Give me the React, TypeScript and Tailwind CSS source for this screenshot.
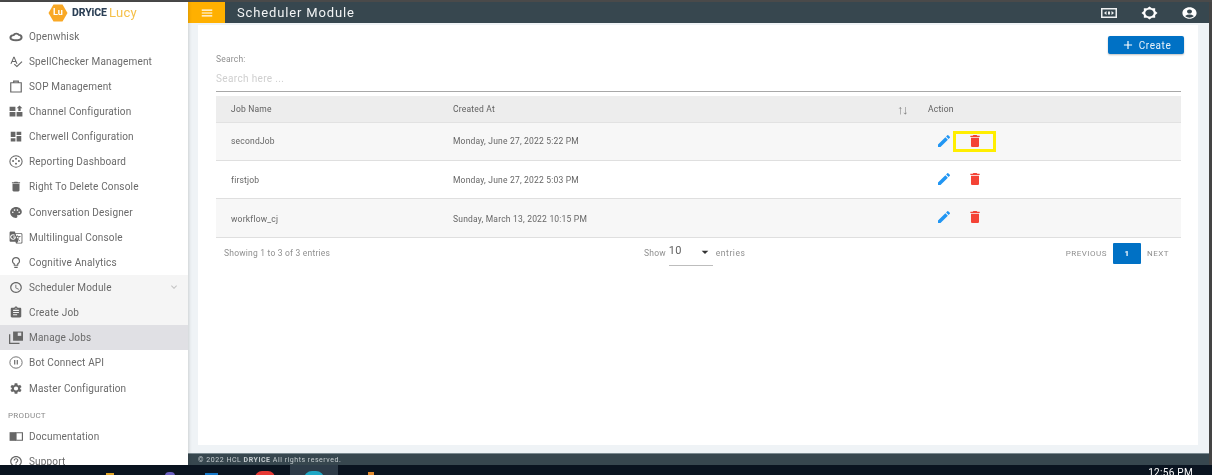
import type { ComponentType } from 'react';
import {
  MdAccessTime,
  MdAccountCircle,
  MdAdd,
  MdArrowDropDown,
  MdAssignment,
  MdBrightness5,
  MdDashboard,
  MdDelete,
  MdEdit,
  MdExpandMore,
  MdGTranslate,
  MdHelpOutline,
  MdLightbulbOutline,
  MdMenu,
  MdPalette,
  MdSettings,
  MdSpellcheck,
} from 'react-icons/md';

type IconProps = { className?: string; preserveAspectRatio?: string };
type NavItem = { label: string; icon: ComponentType<IconProps>; tone?: string; chevron?: boolean };

// the few icons the packages have no close match for
function CloudRing(props: IconProps) {
  return (
    <svg viewBox="0 0 24 24" {...props}>
      <path
        d="M2.500 14.500c0-3.500 3-5 5.500-5 1.500-3.500 7-4 9-.5 2.500 0 4.500 2 4.500 5 0 3-3 5-9.500 5s-9.500-1.500-9.500-4.500z"
        fill="none"
        stroke="currentColor"
        strokeWidth="3.500"
      />
    </svg>
  );
}

function Clipboard(props: IconProps) {
  return (
    <svg viewBox="0 0 24 24" {...props}>
      <path d="M3 5h18v17H3zM8 5V2h8v3" fill="none" stroke="currentColor" strokeWidth="2" />
    </svg>
  );
}

function ChannelGrid(props: IconProps) {
  return (
    <svg viewBox="0 0 24 24" {...props}>
      <path d="M1 3h10v8H1zM1 13h10v8H1zM13 13h10v8H13zM18 1l5 5h-3v5h-4V6h-3z" fill="currentColor" />
    </svg>
  );
}

function DotsDial(props: IconProps) {
  return (
    <svg viewBox="0 0 24 24" {...props}>
      <circle cx="12" cy="12" r="10.500" fill="none" stroke="currentColor" strokeWidth="1.800" />
      <circle cx="7" cy="11" r="1.700" fill="currentColor" />
      <circle cx="12" cy="7" r="1.700" fill="currentColor" />
      <circle cx="17" cy="11" r="1.700" fill="currentColor" />
      <circle cx="12" cy="16" r="1.700" fill="currentColor" />
    </svg>
  );
}

function CardStack(props: IconProps) {
  return (
    <svg viewBox="0 0 24 24" {...props}>
      <path d="M7 1h17v17H7z" fill="currentColor" />
      <path d="M15 3h6v6h-6z" fill="#e0e0e4" />
      <path d="M1 6v17h17" fill="none" stroke="currentColor" strokeWidth="2.400" />
    </svg>
  );
}

function BotRing(props: IconProps) {
  return (
    <svg viewBox="0 0 24 24" {...props}>
      <circle cx="12" cy="12" r="10.500" fill="none" stroke="currentColor" strokeWidth="1.600" />
      <path d="M9.800 7.500v8M14.200 7.500v8" stroke="currentColor" strokeWidth="2" />
    </svg>
  );
}

function BookHalf(props: IconProps) {
  return (
    <svg viewBox="0 0 24 24" {...props}>
      <path d="M1 4h11v16H1z" fill="currentColor" />
      <path d="M12 5h11v14H12z" fill="none" stroke="currentColor" strokeWidth="2" />
    </svg>
  );
}

function Overscan({ className }: { className?: string }) {
  return (
    <svg viewBox="0 0 16 10" className={className}>
      <rect x="0.750" y="0.750" width="14.500" height="8.500" fill="none" stroke="currentColor" strokeWidth="1.500" />
      <path d="M3 5l2.500-2v4zM13 5l-2.500-2v4zM7 3.500h2v3H7z" fill="currentColor" />
    </svg>
  );
}

const navItems: NavItem[] = [
  { label: 'Openwhisk', icon: CloudRing },
  { label: 'SpellChecker Management', icon: MdSpellcheck },
  { label: 'SOP Management', icon: Clipboard },
  { label: 'Channel Configuration', icon: ChannelGrid },
  { label: 'Cherwell Configuration', icon: MdDashboard },
  { label: 'Reporting Dashboard', icon: DotsDial },
  { label: 'Right To Delete Console', icon: MdDelete },
  { label: 'Conversation Designer', icon: MdPalette },
  { label: 'Multilingual Console', icon: MdGTranslate },
  { label: 'Cognitive Analytics', icon: MdLightbulbOutline },
  { label: 'Scheduler Module', icon: MdAccessTime, tone: 'bg-[#f5f5f5]', chevron: true },
  { label: 'Create Job', icon: MdAssignment, tone: 'bg-[#f5f5f5]' },
  { label: 'Manage Jobs', icon: CardStack, tone: 'bg-[#e0e0e4]' },
  { label: 'Bot Connect API', icon: BotRing },
  { label: 'Master Configuration', icon: MdSettings },
];

const jobs = [
  { name: 'secondJob', created: 'Monday, June 27, 2022 5:22 PM', row: 'h-[38px] bg-[#f7f7f7]', text: '' },
  { name: 'firstjob', created: 'Monday, June 27, 2022 5:03 PM', row: 'h-[38px] bg-white', text: 'pt-[2px]' },
  { name: 'workflow_cj', created: 'Sunday, March 13, 2022 10:15 PM', row: 'h-[39px] bg-[#f7f7f7]', text: 'pt-[2px]' },
];

function NavRow({ item }: { item: NavItem }) {
  const Icon = item.icon;
  return (
    <div className={`flex h-[25.15px] shrink-0 items-center gap-[6px] pl-[9px] pr-[8px] ${item.tone ?? ''}`}>
      <Icon preserveAspectRatio="none" className="h-[13px] w-[14px] shrink-0 text-[#666666]" />
      <span className="flex-1 text-[10px] tracking-[0.16px] text-[#6a6a6a]">{item.label}</span>
      {item.chevron && <MdExpandMore className="h-3 w-3 text-[#c4c4c4]" />}
    </div>
  );
}

function Logo() {
  return (
    <div className="flex h-[21px] shrink-0 items-center pl-[48px]">
      <span className="relative flex h-[18px] w-[20px] items-center justify-center">
        <svg viewBox="0 0 20 18" className="absolute inset-0 h-full w-full">
          <path d="M5.500 0.500h9L19.500 9l-5 8.500h-9L0.500 9z" fill="#f9a825" />
        </svg>
        <span className="relative text-[9px] font-bold text-white">Lu</span>
      </span>
      <span className="ml-[4px] text-[10.500px] font-extrabold tracking-[-0.1px] text-[#2b3f55]">DRYiCE</span>
      <span className="ml-[2px] text-[13px] tracking-[0.3px] text-[#f5c04a]">Lucy</span>
    </div>
  );
}

export default function App() {
  return (
    <div className="flex h-[475px] w-[1212px] flex-col overflow-hidden bg-[#0a1420] font-['Roboto',sans-serif] blur-[0.4px]">
      <div className="h-[2px] shrink-0 bg-[#4a4a4a]" />
      <div className="flex h-[463px] shrink-0 border-r-[3px] border-[#444444]">
        {/* Sidebar */}
        <aside className="z-10 flex w-[188px] shrink-0 flex-col overflow-hidden bg-white shadow-[1px_0_3px_rgba(0,0,0,0.15)]">
          <Logo />
          <div className="h-[0.5px] shrink-0" />
          {navItems.map((item) => (
            <NavRow key={item.label} item={item} />
          ))}
          <div className="flex h-[23px] shrink-0 items-end pb-[2px] pl-[8px] text-[8px] tracking-[0.3px] text-[#8a8a8a]">
            PRODUCT
          </div>
          <NavRow item={{ label: 'Documentation', icon: BookHalf }} />
          <NavRow item={{ label: 'Support', icon: MdHelpOutline }} />
        </aside>

        <div className="flex min-w-0 flex-1 flex-col">
          {/* Top bar */}
          <header className="flex h-[21px] shrink-0 items-center bg-[#37474f] text-white">
            <div className="flex h-full w-[37px] items-center justify-center bg-[#ffb000]">
              <MdMenu className="h-[14px] w-[14px]" />
            </div>
            <h1 className="ml-[12px] flex-1 text-[13px] tracking-[0.85px] text-[#f2f4f5]">Scheduler Module</h1>
            <Overscan className="h-[10px] w-[16px] text-[#eef1f2]" />
            <MdBrightness5 preserveAspectRatio="none" className="ml-[24px] h-[14px] w-[17px]" />
            <MdAccountCircle preserveAspectRatio="none" className="ml-[23px] mr-[11px] h-[14px] w-[17px]" />
          </header>

          {/* Content */}
          <main className="flex min-h-0 flex-1 flex-col bg-[#eff3f6] pl-[10px] pr-[11px] pt-[2px]">
            <div className="relative flex h-[420px] shrink-0 flex-col bg-white pl-[18px] pr-[17px]">
              <button className="absolute right-[14px] top-[11px] flex h-[18px] w-[76px] items-center justify-center gap-[4px] rounded-[2px] bg-[#0071c5] text-[10px] tracking-[0.6px] text-[#e8f2fa] shadow-[0_1px_2px_rgba(0,0,0,0.25)]">
                <MdAdd className="h-[14px] w-[14px] text-white" />
                Create
              </button>

              <label className="mt-[28px] text-[8.500px] leading-[12px] tracking-[0.2px] text-[#8f8f8f]">Search:</label>
              <div className="mt-[6px] h-[21px] border-b border-[#a8a8a8] text-[10px] tracking-[0.35px] text-[#cfcfcf]">
                Search here ...
              </div>

              <div className="mt-[4px] grid h-[27px] grid-cols-[237px_475px_1fr] items-center border-b border-[#e2e2e2] bg-[#ededed] pt-[1px] text-[8.500px] tracking-[0.2px] text-[#5f5f5f]">
                <span className="pl-[15px]">Job Name</span>
                <span className="flex items-center justify-between pr-[21px]">
                  Created At
                  <span className="text-[13px] leading-none tracking-[-1.5px] text-[#7f7f7f]">↑↓</span>
                </span>
                <span>Action</span>
              </div>

              {jobs.map((job) => (
                <div
                  key={job.name}
                  className={`grid ${job.row} grid-cols-[237px_475px_1fr] items-center border-b border-[#dfdfdf] text-[8.500px] tracking-[0.2px] text-[#666666]`}
                >
                  <span className={`pl-[15px] ${job.text}`}>{job.name}</span>
                  <span className={job.text}>{job.created}</span>
                  <span className="flex items-center gap-[15px] pb-[2px] pl-[8px]">
                    <MdEdit className="h-4 w-4 text-[#2196f3]" />
                    <MdDelete className="h-4 w-4 text-[#f44336]" />
                  </span>
                </div>
              ))}

              <div className="grid h-[31px] grid-cols-[420px_1fr_auto] items-center pl-[8px] pr-[12px] text-[8.500px] tracking-[0.2px] text-[#8f8f8f]">
                <span>Showing 1 to 3 of 3 entries</span>
                <span className="flex items-center">
                  <span className="mr-[3px]">Show</span>
                  <span className="flex h-[24px] w-[44px] items-start justify-between border-b border-[#bdbdbd] pt-[2px] text-[11px] leading-[14px] text-[#5f5f5f]">
                    10
                    <MdArrowDropDown className="h-[16px] w-[16px] text-[#333333]" />
                  </span>
                  <span className="ml-[3px] tracking-[0.55px]">entries</span>
                </span>
                <span className="flex items-center text-[8px] tracking-[0.5px]">
                  PREVIOUS
                  <span className="mx-[6px] flex h-[21px] w-[28px] items-center justify-center rounded-[1px] bg-[#0071c5] font-bold text-white">
                    1
                  </span>
                  NEXT
                </span>
              </div>

              {/* Highlight round the delete icon */}
              <div className="absolute left-[755px] top-[106px] h-[21px] w-[43px] border-[3px] border-[#ffee00]" />
            </div>
            <div className="flex-1" />
          </main>

          <footer className="flex h-[12px] shrink-0 items-center border-t border-[#7b8a91] bg-[#37474f] pl-[10px] pt-[1px] text-[7px] tracking-[0.53px] text-[#c7ced1]">
            © 2022 HCL&nbsp;<b>DRYICE</b>&nbsp;All rights reserved.
          </footer>
        </div>
      </div>

      {/* Taskbar, cut off at the bottom of the capture */}
      <div className="flex h-[10px] shrink-0 overflow-hidden">
        <span className="ml-[106px] mt-[8px] h-[8px] w-[8px] shrink-0 bg-[#e0a526]" />
        <span className="ml-[51px] mt-[7px] h-[8px] w-[10px] shrink-0 rounded-full bg-[#6a5fc1]" />
        <span className="ml-[30px] mt-[8px] h-[8px] w-[13px] shrink-0 bg-[#1477c9]" />
        <span className="ml-[37px] mt-[6px] h-[14px] w-[20px] shrink-0 rounded-full bg-[#e53935]" />
        <span className="ml-[15px] flex h-[10px] w-[48px] shrink-0 justify-center bg-[#2d3b48] pt-[6px]">
          <span className="h-[16px] w-[20px] rounded-full bg-[#1ea7c5]" />
        </span>
        <span className="ml-[30px] mt-[7px] h-[8px] w-[6px] shrink-0 bg-[#e08a2e]" />
        <span className="ml-auto mr-[19px] mt-[2px] text-[10px] leading-[12px] tracking-[0.3px] text-white">12:56 PM</span>
      </div>
    </div>
  );
}
